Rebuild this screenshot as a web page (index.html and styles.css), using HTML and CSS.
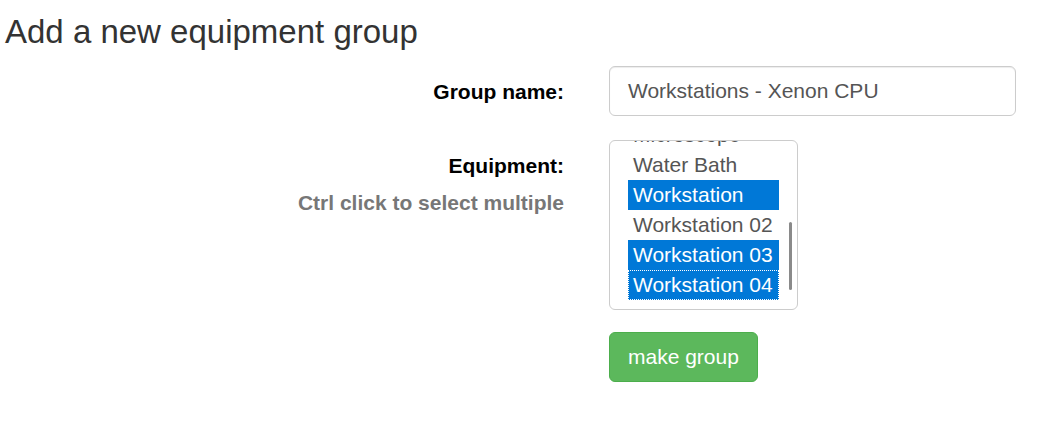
FILE: index.html
```html
<!DOCTYPE html>
<html>
<head>
<meta charset="utf-8">
<link rel="stylesheet" href="styles.css">
</head>
<body>
<div class="page">
  <h1 class="title">Add a new equipment group</h1>
  <form class="form">
    <div class="row row-name">
      <div class="label-col"><label class="label">Group name:</label></div>
      <div class="field-col"><div class="input">Workstations - Xenon CPU</div></div>
    </div>
    <div class="row row-equip">
      <div class="label-col">
        <label class="label">Equipment:</label>
        <p class="help">Ctrl click to select multiple</p>
      </div>
      <div class="field-col">
        <div class="listbox">
          <div class="list">
            <div class="opt">Microscope</div>
            <div class="opt">Water Bath</div>
            <div class="opt sel">Workstation</div>
            <div class="opt">Workstation 02</div>
            <div class="opt sel">Workstation 03</div>
            <div class="opt sel focus">Workstation 04</div>
          </div>
          <div class="scrollbar"></div>
        </div>
      </div>
    </div>
    <div class="row">
      <div class="label-col"></div>
      <div class="field-col"><button type="button" class="btn">make group</button></div>
    </div>
  </form>
</div>
</body>
</html>
```
FILE: styles.css
```css
html, body {
  margin: 0;
  padding: 0;
  background: #fff;
}
body {
  font-family: "Liberation Sans", Arial, sans-serif;
  color: #333;
}
.page {
  padding: 14px 0 0 5px;
}
.title {
  margin: 0;
  font-size: 33px;
  font-weight: normal;
  line-height: 1.1;
  color: #333;
}
.form {
  margin-top: 16px;
  display: flex;
  flex-direction: column;
}
.row {
  display: grid;
  grid-template-columns: 559px 407px;
  column-gap: 45px;
}
.row-name {
  margin-bottom: 24px;
}
.row-equip {
  margin-bottom: 22px;
}
.label-col {
  text-align: right;
}
.label {
  display: block;
  padding-top: 11px;
  font-size: 21px;
  line-height: 30px;
  font-weight: bold;
  color: #000;
}
.help {
  margin: 7px 0 0;
  font-size: 21px;
  line-height: 30px;
  font-weight: bold;
  color: #777;
}
.input {
  box-sizing: border-box;
  height: 50px;
  padding: 9px 18px;
  border: 1px solid #ccc;
  border-radius: 6px;
  font-size: 21px;
  line-height: 30px;
  color: #555;
  box-shadow: inset 0 1px 1px rgba(0,0,0,0.075);
}
.listbox {
  position: relative;
  box-sizing: border-box;
  width: 189px;
  height: 170px;
  border: 1px solid #ccc;
  border-radius: 6px;
  padding: 0 18px;
  overflow: hidden;
}
.list {
  margin-top: -21px;
}
.opt {
  height: 30px;
  padding-left: 5px;
  font-size: 21px;
  line-height: 30px;
  color: #555;
  white-space: nowrap;
}
.opt.sel {
  background: #0078d7;
  color: #fff;
}
.opt.focus {
  outline: 1px dotted #fff;
  outline-offset: -1px;
}
.scrollbar {
  position: absolute;
  right: 5px;
  top: 81px;
  width: 3px;
  height: 68px;
  border-radius: 2px;
  background: #8a8a8a;
}
.btn {
  box-sizing: border-box;
  height: 50px;
  padding: 9px 18px;
  border: 1px solid #4cae4c;
  border-radius: 6px;
  background: #5cb85c;
  color: #fff;
  font-family: "Liberation Sans", Arial, sans-serif;
  font-size: 21px;
  line-height: 30px;
}
```
